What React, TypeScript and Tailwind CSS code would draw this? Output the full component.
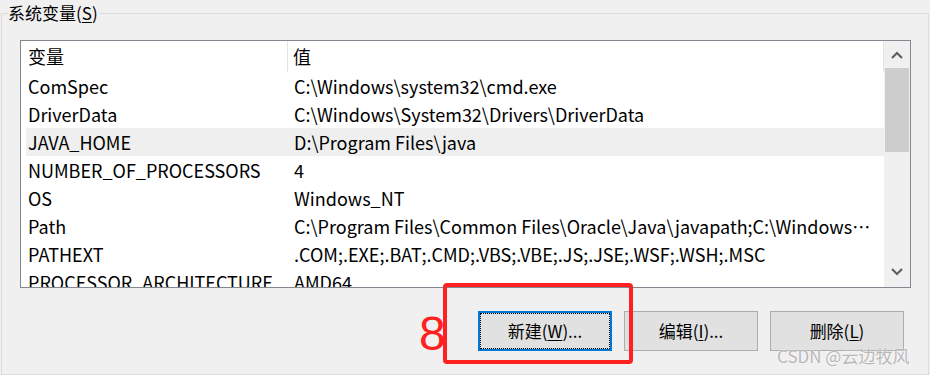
const rows = [
  { name: "ComSpec", value: "C:\\Windows\\system32\\cmd.exe" },
  { name: "DriverData", value: "C:\\Windows\\System32\\Drivers\\DriverData" },
  { name: "JAVA_HOME", value: "D:\\Program Files\\java", selected: true },
  { name: "NUMBER_OF_PROCESSORS", value: "4" },
  { name: "OS", value: "Windows_NT" },
  { name: "Path", value: "C:\\Program Files\\Common Files\\Oracle\\Java\\javapath;C:\\Windows\\system32;C:\\Windows" },
  { name: "PATHEXT", value: ".COM;.EXE;.BAT;.CMD;.VBS;.VBE;.JS;.JSE;.WSF;.WSH;.MSC" },
  { name: "PROCESSOR_ARCHITECTURE", value: "AMD64" },
];

const font = "font-['Noto_Sans_CJK_SC',sans-serif]";

function Chevron({ up }: { up?: boolean }) {
  return (
    <svg width="12" height="8" viewBox="0 0 12 8">
      <polyline
        points={up ? "1,7 6,2 11,7" : "1,1 6,6 11,1"}
        fill="none"
        stroke="#606060"
        strokeWidth="2.2"
      />
    </svg>
  );
}

export default function App() {
  return (
    <div className={`relative h-[375px] w-[930px] overflow-hidden bg-[#f0f0f0] text-[18px] text-black ${font}`}>
      {/* group box */}
      <div className="relative ml-[1px] mt-[13px] h-[362px] w-[928px] border border-[#dcdcdc]">
        <div className="absolute left-[6px] top-[-12px] bg-[#f0f0f0] pr-[2px] text-[17px] leading-[22px]">
          系统变量(<span className="underline underline-offset-2">S</span>)
        </div>

        {/* list view */}
        <div className="ml-[18px] mt-[26px] flex h-[248px] w-[891px] border border-[#828790] bg-white">
          <div className="flex-1 overflow-hidden">
            <div className="flex h-[31px] items-center border-r border-[#e5e5e5] pl-[5px]">
              <div className="flex h-full w-[262px] items-center border-r border-[#e5e5e5] pl-[2px]">变量</div>
              <div className="pl-[5px]">值</div>
            </div>
            {rows.map((r) => (
              <div
                key={r.name}
                className={`ml-[5px] flex h-[28px] items-center whitespace-nowrap ${r.selected ? "bg-[#efefef]" : ""}`}
              >
                <div className="w-[268px] overflow-hidden pl-[2px]">{r.name}</div>
                <div className="w-[582px] overflow-hidden text-ellipsis">{r.value}</div>
              </div>
            ))}
          </div>
          {/* scrollbar */}
          <div className="flex w-[26px] flex-col bg-[#f0f0f0]">
            <div className="flex h-[27px] items-center justify-center">
              <Chevron up />
            </div>
            <div className="mx-[1px] h-[84px] bg-[#cdcdcd]" />
            <div className="flex-1" />
            <div className="flex h-[30px] items-center justify-center">
              <Chevron />
            </div>
          </div>
        </div>

        {/* buttons */}
        <div className="mr-[24px] mt-[23px] flex justify-end gap-[12px] text-[17px]">
          <button className="flex h-[40px] w-[134px] items-center justify-center border-2 border-[#0078d7] bg-[#e1e1e1] p-0">
            <span className="flex h-full w-full items-center justify-center border border-dotted border-black">
              新建(<span className="underline underline-offset-2">W</span>)...
            </span>
          </button>
          <button className="flex h-[40px] w-[134px] items-center justify-center border border-[#adadad] bg-[#e1e1e1]">
            编辑(<span className="underline underline-offset-2">I</span>)...
          </button>
          <button className="flex h-[40px] w-[134px] items-center justify-center border border-[#adadad] bg-[#e1e1e1]">
            删除(<span className="underline underline-offset-2">L</span>)
          </button>
        </div>
      </div>

      {/* annotation */}
      <div className="absolute left-[443px] top-[283px] h-[81px] w-[190px] rounded-[4px] border-[4px] border-[#ff2020]" />
      <div className="absolute left-[419px] top-[304px] font-['Liberation_Sans',sans-serif] text-[48px] leading-[60px] text-[#ff2020]">
        8
      </div>
      <div className="absolute left-[777px] top-[344px] text-[17px] leading-[24px] text-[#b8b8b8] [text-shadow:0_0_2px_#fff]">
        CSDN @云边牧风
      </div>
    </div>
  );
}
